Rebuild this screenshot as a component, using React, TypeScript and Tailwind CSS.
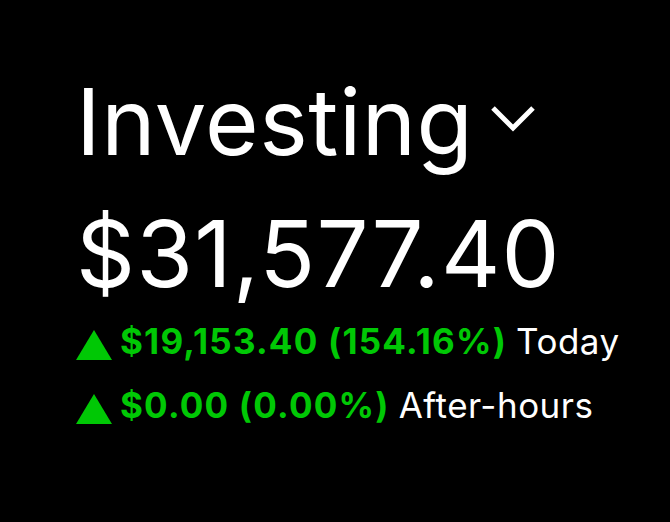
import React from 'react';

function UpTriangle() {
  return (
    <svg width="36" height="30" viewBox="0 0 36 30" className="shrink-0">
      <polygon points="18,0 36,30 0,30" fill="#00c805" />
    </svg>
  );
}

export default function App() {
  const rows = [
    { change: '$19,153.40 (154.16%)', label: 'Today' },
    { change: '$0.00 (0.00%)', label: 'After-hours' },
  ];

  return (
    <div className="w-[670px] h-[522px] bg-black text-white font-['Inter','Liberation_Sans',sans-serif] pl-[76px] pt-[76px]">
      {/* Account selector */}
      <div className="flex items-start">
        <h1 className="text-[92px] leading-none tracking-[0.5px] font-normal">Investing</h1>
        <svg width="44" height="30" viewBox="0 0 44 30" className="ml-[18px] mt-[27px]">
          <polyline points="2,5 22,25 42,5" fill="none" stroke="#fff" strokeWidth="5" />
        </svg>
      </div>

      {/* Portfolio value */}
      <div className="mt-[40px] text-[92px] leading-none tracking-[1.2px]">$31,577.40</div>

      {/* Gains */}
      <div className="mt-[22px] flex flex-col gap-[26px]">
        {rows.map((row) => (
          <div key={row.label} className="flex items-end gap-[8px] text-[35px] leading-[38px]">
            <UpTriangle />
            <span className="font-bold text-[#00c805] tracking-[1.2px]">{row.change}</span>
            <span className="ml-[1px] tracking-[0.5px]">{row.label}</span>
          </div>
        ))}
      </div>
    </div>
  );
}
